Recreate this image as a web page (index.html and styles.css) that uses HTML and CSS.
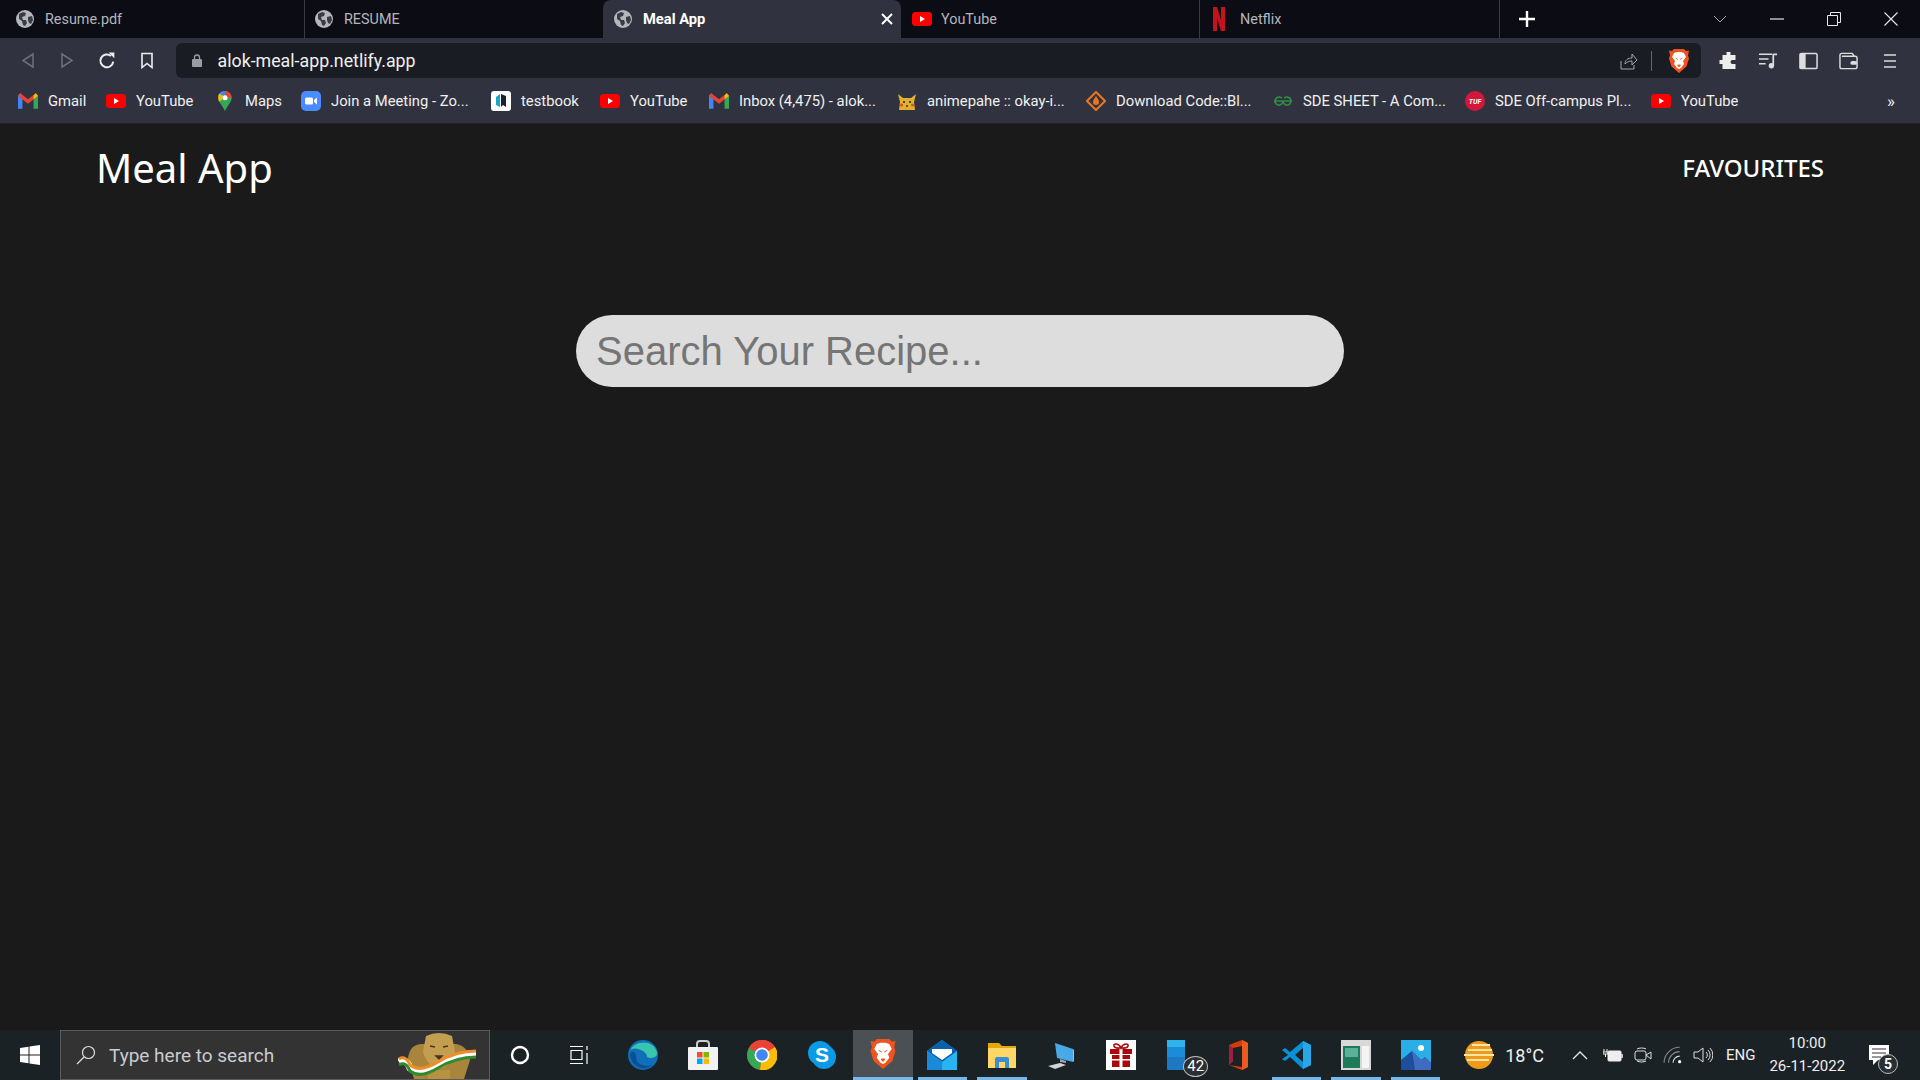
FILE: index.html
```html
<!DOCTYPE html>
<html lang="en">
<head>
    <meta charset="UTF-8">
    <meta name="viewport" content="width=device-width, initial-scale=1.0">
    <title>Meal App</title>
    <link rel="stylesheet" href="styles.css">
</head>
<body>
    <svg class="defs" width="0" height="0">
        <symbol id="globe" viewBox="0 0 18 18">
            <circle cx="9" cy="9" r="9" fill="#b5b7bc"/>
            <path d="M3 4l4-2 3 1-1 3-3 1 1 3 3 0 1 3-2 3-2-1-1-4-3-2zM12 7l4-1 1 4-2 4-2-1-1-3z" fill="#3a3c45"/>
        </symbol>
        <symbol id="yt" viewBox="0 0 20 14">
            <rect width="20" height="14" rx="3.5" fill="#f00"/>
            <path d="M8 4l5 3-5 3z" fill="#fff"/>
        </symbol>
        <symbol id="gmail" viewBox="0 0 18 14">
            <path d="M0 14V2l2-2 2 2v12H1a1 1 0 0 1-1-0z" fill="#4285f4"/>
            <path d="M14 14V2l2-2 2 2v12z" fill="#34a853"/>
            <path d="M0 2.5L2 0l7 5.5L16 0l2 2.5L9 9.5z" fill="#ea4335"/>
            <path d="M14 2l2-2 2 2.500-4 3z" fill="#fbbc04"/>
        </symbol>
        <symbol id="brave" viewBox="0 0 20 24">
            <path d="M5 0h10l2 2 3-.5-1 5 1 3-2.500 8L10 24l-7.500-6.500L0 9.500l1-3-1-5 3 .5z" fill="#f1531f"/>
            <path d="M5 4l3-1h4l3 1 2 4-3 4 1 3-3 4-2 1-2-1-3-4 1-3-3-4z" fill="#fff"/>
            <path d="M6.500 9l2.500 1.500M13.500 9L11 10.500M8.500 16h3L10 18z" stroke="#f1531f" stroke-width=".8" fill="#f1531f"/>
        </symbol>
    </svg>

    <div class="tabstrip">
        <div class="tab">
            <svg class="favicon"><use href="#globe"/></svg>
            <span>Resume.pdf</span>
        </div>
        <div class="tab tab-sep">
            <svg class="favicon"><use href="#globe"/></svg>
            <span>RESUME</span>
        </div>
        <div class="tab tab-active">
            <svg class="favicon"><use href="#globe"/></svg>
            <span>Meal App</span>
            <svg class="tab-close" viewBox="0 0 12 12"><path d="M1 1l10 10M11 1L1 11" stroke="#fff" stroke-width="2"/></svg>
        </div>
        <div class="tab">
            <svg class="favicon"><use href="#yt"/></svg>
            <span>YouTube</span>
        </div>
        <div class="tab tab-sep tab-last">
            <svg class="favicon netflix" viewBox="0 0 12 24"><path d="M0 0h4l4 13V0h4v24H8L4 11v13H0z" fill="#c4131c"/></svg>
            <span>Netflix</span>
        </div>
        <svg class="new-tab" viewBox="0 0 16 16"><path d="M8 0v16M0 8h16" stroke="#fff" stroke-width="2.400"/></svg>
        <div class="window-controls">
            <svg class="tab-list" viewBox="0 0 14 8"><path d="M1 1l6 6 6-6" stroke="#a6a8ad" fill="none"/></svg>
            <svg class="win-btn" viewBox="0 0 14 14"><path d="M0 7h14" stroke="#e6e6e6" stroke-width="1.200"/></svg>
            <svg class="win-btn" viewBox="0 0 14 14"><path d="M.5 3.500h10v10H.5zM3.500 3.500v-3h10v10h-3" stroke="#e6e6e6" fill="none"/></svg>
            <svg class="win-btn" viewBox="0 0 14 14"><path d="M.5.500l13 13M13.500.500l-13 13" stroke="#e6e6e6" stroke-width="1.100"/></svg>
        </div>
    </div>

    <div class="toolbar">
        <svg class="nav-icon" viewBox="0 0 14 16"><path d="M12 1.500v13L2 8z" stroke="#6e7078" stroke-width="1.500" fill="none"/></svg>
        <svg class="nav-icon" viewBox="0 0 14 16"><path d="M2 1.500v13L12 8z" stroke="#6e7078" stroke-width="1.500" fill="none"/></svg>
        <svg class="nav-icon" viewBox="0 0 16 16"><path d="M13.500 8.500A5.700 5.700 0 1 1 11.500 3.500" stroke="#eee" stroke-width="1.800" fill="none"/><path d="M9.500 .500h5v5z" fill="#eee"/></svg>
        <svg class="nav-icon" viewBox="0 0 14 16"><path d="M2 1h10v14l-5-4-5 4z" stroke="#eee" stroke-width="1.600" fill="none"/></svg>
        <div class="address-bar">
            <svg class="lock" viewBox="0 0 10 13"><path d="M2.500 5V3.500a2.500 2.500 0 0 1 5 0V5" stroke="#9a9ca3" stroke-width="1.300" fill="none"/><rect y="5" width="10" height="8" rx="1" fill="#9a9ca3"/></svg>
            <span class="url">alok-meal-app.netlify.app</span>
            <svg class="share" viewBox="0 0 18 18"><path d="M1 9v8h13v-4" stroke="#a4a6ac" fill="none"/><path d="M5 12c0-4 3-6 7-6V2l5 6-5 5V9c-3 0-5 1-7 3z" stroke="#a4a6ac" fill="none"/></svg>
            <span class="address-sep"></span>
            <svg class="brave-shield"><use href="#brave"/></svg>
        </div>
        <div class="toolbar-icons">
            <svg viewBox="0 0 18 18"><path d="M7 0h4v3h5v5h-3a2 2 0 0 0 0 4h3v5H3v-5H0V8h3V3h4z" fill="#eee"/></svg>
            <svg viewBox="0 0 20 18"><path d="M0 2h14M0 7h10M0 12h7" stroke="#ddd" stroke-width="1.600"/><path d="M15 2h4M15 2v12" stroke="#ddd" stroke-width="1.800"/><circle cx="13" cy="14" r="2.800" fill="#ddd"/></svg>
            <svg viewBox="0 0 20 18"><rect x="1" y="1" width="18" height="16" rx="1.500" stroke="#ddd" stroke-width="1.600" fill="none"/><rect x="1" y="1" width="6" height="16" fill="#ddd"/></svg>
            <svg viewBox="0 0 20 18"><path d="M1 5V3a2 2 0 0 1 2-2h11l2 3M1 5v10a2 2 0 0 0 2 2h14a2 2 0 0 0 2-2V6a2 2 0 0 0-2-2H3" stroke="#ddd" stroke-width="1.500" fill="none"/><rect x="12" y="9" width="7" height="4" rx="2" fill="#ddd"/></svg>
            <svg viewBox="0 0 14 16"><path d="M1 2h12M1 8h12M1 14h12" stroke="#ddd" stroke-width="1.700"/></svg>
        </div>
    </div>

    <div class="bookmarks">
        <div class="bookmark w-gmail"><svg class="bm-icon"><use href="#gmail"/></svg><span>Gmail</span></div>
        <div class="bookmark w-yt"><svg class="bm-icon"><use href="#yt"/></svg><span>YouTube</span></div>
        <div class="bookmark w-maps"><svg class="bm-icon" viewBox="0 0 20 24"><path d="M10 0a8 8 0 0 1 8 8c0 5-5 9-8 16-3-7-8-11-8-16a8 8 0 0 1 8-8z" fill="#34a853"/><path d="M3 3a8 8 0 0 1 7-3v5a3 3 0 0 0-2 1z" fill="#4285f4"/><path d="M2 8a8 8 0 0 1 1-5l5 3a3 3 0 0 0-1 4l-4 3a9 9 0 0 1-1-5z" fill="#fbbc04"/><path d="M10 0a8 8 0 0 1 8 8h-5a3 3 0 0 0-3-3z" fill="#ea4335"/><circle cx="10" cy="8" r="3" fill="#fff"/></svg><span>Maps</span></div>
        <div class="bookmark w-zoom"><svg class="bm-icon" viewBox="0 0 20 20"><rect width="20" height="20" rx="5" fill="#4a8cff"/><rect x="4" y="6.500" width="8" height="7" rx="1.500" fill="#fff"/><path d="M13 9l3-2.500v7L13 11z" fill="#fff"/></svg><span>Join a Meeting - Zo...</span></div>
        <div class="bookmark w-testbook"><svg class="bm-icon" viewBox="0 0 20 20"><rect width="20" height="20" rx="3" fill="#fff"/><path d="M5 6l4-3v13l-4-2z" fill="#1aa5c9"/><path d="M10 3l5 2v11l-3-2-2 2z" fill="#1a2230"/></svg><span>testbook</span></div>
        <div class="bookmark w-yt"><svg class="bm-icon"><use href="#yt"/></svg><span>YouTube</span></div>
        <div class="bookmark w-inbox"><svg class="bm-icon"><use href="#gmail"/></svg><span>Inbox (4,475) - alok...</span></div>
        <div class="bookmark w-anime"><svg class="bm-icon" viewBox="0 0 20 20"><path d="M1 3l5 4h8l5-4-2 8 1 8H2l1-8z" fill="#e0b030"/><circle cx="7" cy="11" r="1" fill="#222"/><circle cx="13" cy="11" r="1" fill="#222"/><circle cx="4.500" cy="14" r="1.500" fill="#d8502c"/><circle cx="15.500" cy="14" r="1.500" fill="#d8502c"/><path d="M9 14h2v2H9z" fill="#8a3a20"/></svg><span>animepahe :: okay-i...</span></div>
        <div class="bookmark w-code"><svg class="bm-icon" viewBox="0 0 20 20"><path d="M10 1l9 9-9 9-9-9z" fill="none" stroke="#e87722" stroke-width="2"/><path d="M10 5c2 3 3 4 3 6a3 3 0 0 1-6 0c0-2 1-3 3-6z" fill="#e87722"/></svg><span>Download Code::Bl...</span></div>
        <div class="bookmark w-sde"><svg class="bm-icon" viewBox="0 0 20 12"><path d="M10 6a4 4 0 1 1-1.200-2.800M10 6a4 4 0 1 0 1.200-2.800M1 6h18" fill="none" stroke="#2f8d46" stroke-width="1.600"/></svg><span>SDE SHEET - A Com...</span></div>
        <div class="bookmark w-tuf"><svg class="bm-icon" viewBox="0 0 20 20"><circle cx="10" cy="10" r="10" fill="#d3173a"/><text x="10" y="12.500" class="tuf-text">TUF</text></svg><span>SDE Off-campus Pl...</span></div>
        <div class="bookmark"><svg class="bm-icon"><use href="#yt"/></svg><span>YouTube</span></div>
        <span class="bm-more">»</span>
    </div>

    <main class="page">
        <nav class="app-nav">
            <a class="brand">Meal App</a>
            <a class="fav-link">FAVOURITES</a>
        </nav>
        <div class="search-wrap">
            <input class="search-input" type="text" placeholder="Search Your Recipe...">
        </div>
    </main>

    <footer class="taskbar">
        <div class="start">
            <svg viewBox="0 0 20 20"><path d="M0 3l8.500-1.200V9.500H0zM9.500 1.600L20 0v9.500H9.500zM0 10.500h8.500v7.700L0 17zM9.500 10.500H20V20L9.500 18.400z" fill="#fff"/></svg>
        </div>
        <div class="task-search">
            <svg class="task-search-icon" viewBox="0 0 20 20"><circle cx="12.500" cy="7.500" r="6" stroke="#ddd" stroke-width="1.200" fill="none"/><path d="M8 12l-7 7" stroke="#ddd" stroke-width="1.200"/></svg>
            <span>Type here to search</span>
            <svg class="lion" viewBox="0 0 80 47">
                <path d="M16 47L10 26Q12 12 24 12H58Q70 14 72 28L66 47z" fill="#a8853a"/>
                <path d="M28 4Q41-2 54 4L57 20Q52 35 41 37 30 35 25 20z" fill="#c49e50"/>
                <path d="M32 14l5 1M45 15l5-1M38 24h6l-3 3z" stroke="#4a3415" stroke-width="1.500" fill="#4a3415"/>
                <path d="M30 47V38h22v9z" fill="#b8923f"/>
                <path d="M1 30Q8 26 12 36 22 44 40 33T78 22" stroke="#fff" stroke-width="7" fill="none"/>
                <path d="M1 27Q8 23 12 33 22 41 40 30T78 19" stroke="#f28c28" stroke-width="3" fill="none"/>
                <path d="M1 33Q8 29 12 39 22 47 40 36T78 25" stroke="#2e8b2e" stroke-width="3" fill="none"/>
            </svg>
        </div>
        <div class="task-tile">
            <svg viewBox="0 0 20 20"><circle cx="10" cy="10" r="8" stroke="#fff" stroke-width="2.400" fill="none"/></svg>
        </div>
        <div class="task-tile">
            <svg viewBox="0 0 20 20"><path d="M1 1.500h13M1 18.500h13M2 5.500h11v9H2zM18 1v4M18 8v11" stroke="#fff" stroke-width="1.200" fill="none"/></svg>
        </div>
        <div class="task-tile tile-edge">
            <svg class="big" viewBox="0 0 30 30"><circle cx="15" cy="15" r="15" fill="#0f6fb8"/><path d="M2 11C5 1 25-2 29 12c1 6-6 7-10 5 1-6-14-12-17-6z" fill="#38c4b0"/><path d="M8 17c0 7 8 11 16 8-8 7-21 2-22-11 3-4 6-2 6 3z" fill="#0a4f96"/></svg>
        </div>
        <div class="task-tile">
            <svg class="big" viewBox="0 0 30 30"><path d="M9 8V4a3 3 0 0 1 3-3h6a3 3 0 0 1 3 3v4" stroke="#ccc" stroke-width="2" fill="none"/><rect y="7" width="30" height="23" rx="1" fill="#f2f2f2"/><rect x="9" y="12" width="5.500" height="5.500" fill="#f25022"/><rect x="15.500" y="12" width="5.500" height="5.500" fill="#7fba00"/><rect x="9" y="18.500" width="5.500" height="5.500" fill="#00a4ef"/><rect x="15.500" y="18.500" width="5.500" height="5.500" fill="#ffb900"/></svg>
        </div>
        <div class="task-tile">
            <svg class="big" viewBox="0 0 30 30"><circle cx="15" cy="15" r="15" fill="#db4437"/><path d="M15 15L28 7a15 15 0 0 0-26 1z" fill="#ea4335"/><path d="M15 15L2 8a15 15 0 0 0 11 22z" fill="#34a853"/><path d="M15 15l13-8a15 15 0 0 1-15 23z" fill="#fbbc04"/><circle cx="15" cy="15" r="7.500" fill="#fff"/><circle cx="15" cy="15" r="5.800" fill="#4285f4"/></svg>
        </div>
        <div class="task-tile">
            <svg class="big" viewBox="0 0 30 30"><circle cx="13" cy="13" r="12" fill="#0a9ae6"/><circle cx="17" cy="17" r="12" fill="#0a9ae6"/><text x="15" y="22" class="skype-text">S</text></svg>
        </div>
        <div class="task-tile tile-active">
            <svg class="big"><use href="#brave"/></svg>
        </div>
        <div class="task-tile tile-open">
            <svg class="big" viewBox="0 0 30 30"><path d="M0 11L15 0l15 11v19H0z" fill="#28b4f0"/><path d="M0 11L15 0l15 11-15 11z" fill="#0a5fae"/><path d="M5 9h20v4l-10 7-10-7z" fill="#fff"/><path d="M0 11l15 11v8H0z" fill="#1a8ad8"/></svg>
        </div>
        <div class="task-tile tile-open">
            <svg class="big" viewBox="0 0 30 30"><path d="M1 3h11l3 3h14v22H1z" fill="#e3a90c"/><rect x="1" y="8" width="28" height="20" fill="#ffd767"/><path d="M8 28V19a2 2 0 0 1 2-2h10a2 2 0 0 1 2 2v9h-4v-6h-6v6z" fill="#3d8ed0"/></svg>
        </div>
        <div class="task-tile">
            <svg class="big" viewBox="0 0 30 30"><path d="M9 3l18 6v13L11 18z" fill="#48a9e6"/><path d="M27 9v13l1-1V10z" fill="#aebfcc"/><path d="M14 19l6 2v2l-6-1z" fill="#9aa4aa"/><path d="M2 26l12-3 6 2-11 4z" fill="#cfd4d8"/></svg>
        </div>
        <div class="task-tile">
            <svg class="big gift" viewBox="0 0 30 30"><rect width="30" height="30" fill="#fff"/><path d="M4 9h22v5H4zM6 15h18v12H6z" fill="#a80a0a"/><path d="M13.500 9h3v18h-3zM6 19h18v1.500H6z" fill="#fff"/><path d="M15 8c-2-5-8-5-7-2s5 2 7 2c2 0 6 1 7-2s-5-3-7 2z" stroke="#a80a0a" stroke-width="1.600" fill="none"/></svg>
        </div>
        <div class="task-tile tile-phone">
            <svg class="phone" viewBox="0 0 18 30"><rect width="18" height="30" rx="1" fill="#1e78c2"/><rect width="18" height="7" fill="#2fb4ea"/><rect y="7" width="18" height="10" fill="#1b8cd8"/></svg>
            <span class="badge">42</span>
        </div>
        <div class="task-tile">
            <svg class="big" viewBox="0 0 30 30"><path d="M7 5L20 0l6 3v24l-6 3-13-5 13 2V6l-9 2v13l-4 4z" fill="#d83b01"/><path d="M7 5v20l4-4V8z" fill="#9c1f3f"/><path d="M20 0l6 3v24l-6 3z" fill="#eb5a22"/></svg>
        </div>
        <div class="task-tile tile-open">
            <svg class="big" viewBox="0 0 30 30"><path d="M21 1l8 4v20l-8 4L8 17l-5 4-3-2 6-4-6-5 3-2 5 4z" fill="#0a8fd8"/><path d="M21 8l-8 7 8 7z" fill="#1b2226"/><path d="M21 1l8 4v20l-8 4z" fill="#28a8ea"/></svg>
        </div>
        <div class="task-tile tile-open">
            <svg class="big" viewBox="0 0 30 30"><rect width="30" height="30" fill="#d8d8d8"/><rect x="2" y="6" width="17" height="22" fill="#1f7a5a"/><rect x="21" y="6" width="7" height="22" fill="#f5f5f5"/><rect x="4" y="8" width="13" height="9" fill="#5ab09a"/></svg>
        </div>
        <div class="task-tile tile-open">
            <svg class="big" viewBox="0 0 30 30"><rect width="30" height="30" fill="#29aee6"/><path d="M0 30V20l11-9 9 9 4-3 6 6v7z" fill="#1c4f9c"/><path d="M11 11l9 9 4-3 6 6v7H14z" fill="#3f6cc0"/><circle cx="20" cy="8" r="3" fill="#fff"/></svg>
        </div>
        <div class="weather">
            <svg viewBox="0 0 30 30"><circle cx="15" cy="15" r="14" fill="#f09a1a"/><path d="M8 5h18M4 10h24M0 15h30M3 20h22" stroke="#ffe6a8" stroke-width="2"/></svg>
            <span>18°C</span>
        </div>
        <div class="tray">
            <svg class="tray-chevron" viewBox="0 0 16 9"><path d="M1 8l7-7 7 7" stroke="#e8e8e8" stroke-width="1.300" fill="none"/></svg>
            <svg class="tray-icon" viewBox="0 0 20 14"><path d="M1 1v3M4 1v3M0 4h5v2H0zM2.500 6v3" stroke="#eee" fill="none"/><rect x="5" y="3" width="13" height="10" rx="1" stroke="#eee" fill="#eee"/><path d="M19 6v4" stroke="#eee" stroke-width="1.500"/></svg>
            <svg class="tray-icon" viewBox="0 0 18 20"><path d="M3 4a6 3 0 0 1 9 0M3 16a6 3 0 0 0 9 0" stroke="#ddd" fill="none"/><rect x="1" y="6" width="11" height="9" rx="2" stroke="#ddd" fill="none"/><path d="M12 10l5-3v7z" stroke="#ddd" fill="none"/></svg>
            <svg class="tray-icon" viewBox="0 0 18 16"><path d="M1 15A14 14 0 0 1 15 1M5 15A10 10 0 0 1 15 5" stroke="#888" fill="none"/><path d="M9 15a6 6 0 0 1 6-6" stroke="#ddd" fill="none"/><circle cx="15" cy="14" r="1.500" fill="#fff"/></svg>
            <svg class="tray-icon" viewBox="0 0 20 18"><path d="M1 6h4l5-4v14l-5-4H1z" stroke="#ddd" fill="none"/><path d="M13 6a4 4 0 0 1 0 6M15 4a7 7 0 0 1 0 10M17 2a10 10 0 0 1 0 14" stroke="#ddd" fill="none"/></svg>
            <span class="lang">ENG</span>
            <div class="clock"><span>10:00</span><span>26-11-2022</span></div>
            <div class="notify">
                <svg viewBox="0 0 20 20"><path d="M0 0h20v15H9l-5 5v-5H0z" fill="#fff"/><path d="M3 4h14M3 8h14M3 12h9" stroke="#333"/></svg>
                <span class="notify-badge">5</span>
            </div>
        </div>
    </footer>
</body>
</html>
```

FILE: styles.css
```css
* { box-sizing: border-box; }
html, body { height: 100%; }
body { margin: 0; height: 1080px; display: flex; flex-direction: column; overflow: hidden; background-color: #1a1a1a; font-family: Roboto, "Liberation Sans", sans-serif; color: #eee; }
svg { display: block; flex-shrink: 0; }
.defs { position: absolute; }

/* browser chrome */
.tabstrip { height: 38px; flex-shrink: 0; display: flex; align-items: stretch; background-color: #0c0c15; }
.tab { width: 298px; height: 38px; display: flex; align-items: center; padding-left: 16px; gap: 11px; font-size: 14.400px; color: #b4b6bb; position: relative; }
.tab:first-child { width: 304px; }
.tab-sep { border-left: 1px solid #3a3c45; padding-left: 10px; }
.tab:nth-child(2) { width: 299px; }
.tab-sep.tab-last { width: 301px; border-right: 1px solid #3a3c45; padding-left: 13px; gap: 15px; }
.tab:nth-child(4) { padding-left: 11px; gap: 9px; }
.tab-active { height: 38px; padding-left: 11px; background-color: #30333f; border-radius: 8px 8px 0 0; color: #fff; font-weight: 700; font-size: 14.700px; }
.tab-close { width: 12px; height: 12px; margin-left: auto; margin-right: 8px; }
.favicon { width: 18px; height: 18px; }
.tab:nth-child(4) .favicon { width: 20px; height: 14px; }
.netflix { width: 12px; height: 24px; }
.new-tab { width: 16px; height: 16px; margin: 11px 0 0 19px; }
.window-controls { margin-left: auto; display: flex; align-items: center; gap: 43px; padding: 0 22px 0 0; }
.tab-list { width: 14px; height: 8px; }
.win-btn { width: 14px; height: 14px; }

.toolbar { height: 45px; flex-shrink: 0; display: flex; align-items: center; padding: 0 0 0 21px; background-color: #30333f; }
.nav-icon { width: 14px; height: 17px; margin-right: 25px; }
.nav-icon:nth-child(3) { width: 18px; height: 18px; margin-right: 24px; margin-left: -1px; }
.nav-icon:nth-child(4) { margin-right: 21.500px; }
.address-bar { width: 1525px; height: 35px; display: flex; align-items: center; background-color: #1a1c23; border-radius: 6px; padding: 0 0 0 16px; }
.lock { width: 10px; height: 13px; }
.url { margin-left: 16px; font-size: 17.800px; color: #f0f0f0; }
.share { width: 18px; height: 18px; margin-left: auto; }
.address-sep { width: 1px; height: 20px; margin: 0 17px 0 13px; background-color: #666; }
.brave-shield { width: 20px; height: 24px; margin-right: 12px; }
.toolbar-icons { display: flex; align-items: center; gap: 21px; margin-left: 18px; }
.toolbar-icons svg { width: 19px; height: 18px; }
.toolbar-icons svg:last-child { width: 14px; margin-left: 4px; }

.bookmarks { height: 41px; flex-shrink: 0; display: flex; align-items: center; padding: 0 0 4px 18px; background-color: #30333f; border-bottom: 1px solid #202028; font-size: 14.800px; color: #f0f0f0; }
.bookmark { display: flex; align-items: center; gap: 10px; white-space: nowrap; }
.bm-icon { width: 20px; height: 20px; }
.w-gmail { width: 88px; }
.w-yt { width: 109px; }
.w-maps { width: 86px; }
.w-zoom { width: 190px; }
.w-testbook { width: 109px; }
.w-inbox { width: 188px; }
.w-anime { width: 189px; }
.w-code { width: 187px; }
.w-sde { width: 192px; }
.w-tuf { width: 186px; }
.bm-more { margin-left: auto; margin-right: 25px; font-size: 17px; }
.tuf-text { font-size: 7px; font-weight: 700; font-style: italic; fill: #fff; text-anchor: middle; }

/* the app itself */
.page { flex: 1; padding: 0 96px; background-color: #1a1a1a; }
.app-nav { height: 86px; display: flex; align-items: center; justify-content: space-between; }
.brand { font-family: "Noto Sans", sans-serif; font-size: 40px; color: #fff; }
.fav-link { font-family: "Noto Sans", sans-serif; font-size: 24px; font-weight: 500; color: #fff; }
.search-wrap { display: flex; justify-content: center; margin-top: 105px; }
.search-input { width: 768px; height: 72px; border: none; border-radius: 36px; padding: 0 20px; background-color: #ddd; font-family: "Liberation Sans", Arial, sans-serif; font-size: 40px; color: #333; outline: none; }
.search-input::placeholder { color: #757575; }

/* windows taskbar */
.taskbar { height: 50px; flex-shrink: 0; display: flex; align-items: center; background-color: #1b2226; }
.start { width: 60px; height: 50px; display: flex; align-items: center; justify-content: center; }
.start svg { width: 20px; height: 20px; }
.task-search { width: 430px; height: 50px; display: flex; align-items: center; padding-left: 15px; background-color: #333; border: 1px solid #5c5c5c; font-size: 19px; color: #c8ccd0; position: relative; }
.task-search-icon { width: 20px; height: 20px; margin-right: 13px; }
.lion { position: absolute; right: 11px; bottom: 0; width: 80px; height: 47px; }
.task-tile { width: 59.400px; height: 50px; flex-shrink: 0; display: flex; align-items: center; justify-content: center; position: relative; }
.task-tile svg { width: 20px; height: 20px; }
.task-tile .big { width: 30px; height: 30px; }
.tile-edge { margin-left: 5px; }
.tile-active { margin-left: 2px; background-color: #4a5053; border-bottom: 3px solid #76b9ed; }
.tile-open::after { content: ""; position: absolute; left: 5px; right: 5px; bottom: 0; height: 3px; background-color: #76b9ed; }
.tile-phone { margin-left: -2px; }
.task-tile .phone { width: 18px; height: 30px; margin-left: -4px; }
.badge { position: absolute; left: 35px; bottom: 3px; width: 25px; height: 21px; border-radius: 50%; background-color: #2a2f33; border: 1px solid #bbb; font-size: 15px; line-height: 19px; text-align: center; color: #fff; }
.weather { display: flex; align-items: center; gap: 11px; margin-left: 19px; font-size: 18px; color: #eee; }
.weather svg { width: 30px; height: 30px; }
.tray { flex: 1; display: flex; align-items: center; margin-left: 28px; }
.tray-chevron { width: 16px; height: 9px; margin-right: 15px; }
.tray-icon { width: 20px; height: 20px; margin-right: 10px; }
.lang { font-size: 15px; margin-left: 3px; color: #eee; }
.clock { display: flex; flex-direction: column; align-items: center; margin-left: 14px; font-size: 15px; line-height: 23px; color: #eee; }
.notify { position: relative; margin-left: 24px; }
.notify svg { width: 20px; height: 20px; }
.notify-badge { position: absolute; left: 9px; top: 9px; width: 20px; height: 20px; border-radius: 50%; background-color: #2a2f33; border: 1px solid #bbb; font-size: 14px; font-weight: 700; line-height: 18px; text-align: center; color: #fff; }
.skype-text { font-family: "Liberation Sans", sans-serif; font-size: 21px; font-weight: 700; fill: #fff; text-anchor: middle; }
```
